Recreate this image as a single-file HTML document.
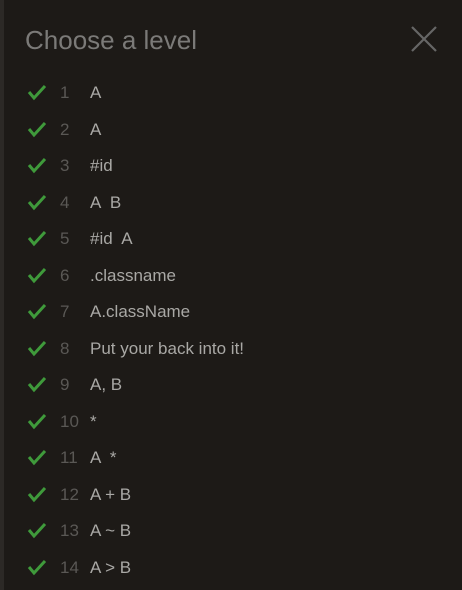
<!DOCTYPE html>
<html><head><style>
html,body{margin:0;padding:0;width:462px;height:590px;overflow:hidden;}
body{background:#1d1a17;position:relative;font-family:"Liberation Sans","DejaVu Sans",sans-serif;}
.bar{position:absolute;left:0;top:0;width:4px;height:590px;background:#2c2926;}
h1{position:absolute;left:25px;top:25px;margin:0;font-weight:normal;font-size:26px;color:#7b7a78;}
.row{position:absolute;left:0;height:30px;width:462px;}
.row svg{position:absolute;left:27px;top:-9px;}
.n{position:absolute;left:60px;top:-10px;font-size:17px;color:#5a5855;}
.t{position:absolute;left:90px;top:-10px;font-size:17px;color:#a9a8a5;white-space:pre;}
</style></head><body>
<div class="bar"></div>
<h1>Choose a level</h1>
<svg style="position:absolute;left:410px;top:25px" width="28" height="28" viewBox="0 0 28 28"><path d="M2 2L26 26M26 2L2 26" stroke="#666" stroke-width="2.2"/></svg>
<div id="list"></div>
<script>
var items=["A","A","#id","A  B","#id  A",".classname","A.className","Put your back into it!","A, B","*","A  *","A + B","A ~ B","A > B"];
var h="";
items.forEach(function(t,i){
var y=93+i*36.5;
var chk='<svg width="20" height="17" viewBox="0 0 20 17"><path d="M2 8L7 14L18 2" stroke="#3f9a3b" stroke-width="3" fill="none"/></svg>';
h+='<div class="row" style="top:'+y+'px">'+chk+'<span class="n">'+(i+1)+'</span><span class="t">'+t.replace(/&/g,"&amp;").replace(/</g,"&lt;").replace(/>/g,"&gt;")+'</span></div>';
});
document.getElementById("list").innerHTML=h;
</script>
</body></html>
